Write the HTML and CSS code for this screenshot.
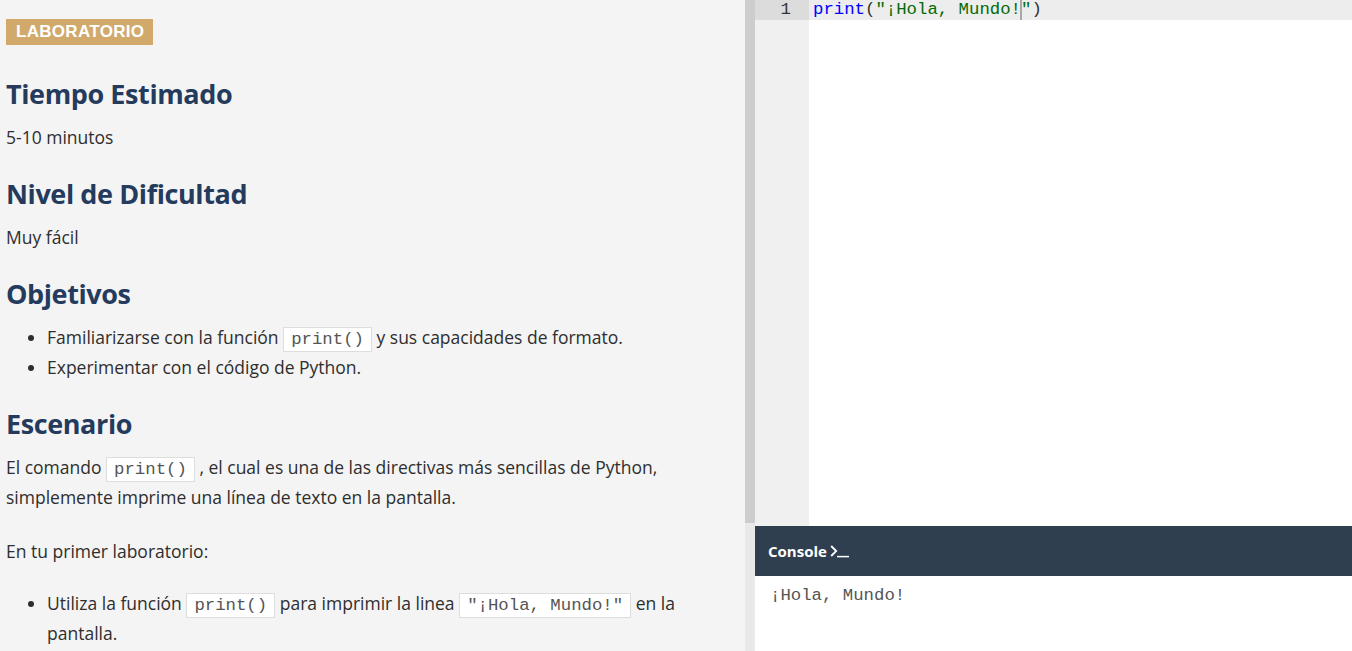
FILE: index.html
```html
<!DOCTYPE html>
<html lang="es">
<head>
<meta charset="utf-8">
<title>Laboratorio - ¡Hola, Mundo!</title>
<link rel="stylesheet" href="styles.css">
</head>
<body>
<div class="app">
  <main class="lesson">
    <div class="badge-row"><span class="badge">LABORATORIO</span></div>

    <h3 class="lesson-heading">Tiempo Estimado</h3>
    <p class="lesson-text">5-10 minutos</p>

    <h3 class="lesson-heading">Nivel de Dificultad</h3>
    <p class="lesson-text">Muy fácil</p>

    <h3 class="lesson-heading">Objetivos</h3>
    <ul class="lesson-list">
      <li>Familiarizarse con la función <code class="inline-code">print()</code> y sus capacidades de formato.</li>
      <li>Experimentar con el código de Python.</li>
    </ul>

    <h3 class="lesson-heading">Escenario</h3>
    <p class="lesson-text">El comando <code class="inline-code">print()</code> , el cual es una de las directivas más sencillas de Python, simplemente imprime una línea de texto en la pantalla.</p>

    <p class="lesson-text lesson-text-lead">En tu primer laboratorio:</p>
    <ul class="lesson-list">
      <li>Utiliza la función <code class="inline-code">print()</code> para imprimir la linea <code class="inline-code">"¡Hola, Mundo!"</code> en la pantalla.</li>
      <li>Una vez hecho esto, utiliza la función <code class="inline-code">print()</code> nuevamente, pero esta vez imprime tu nombre.</li>
    </ul>
  </main>

  <div class="scrollbar"><div class="scrollbar-thumb"></div></div>

  <section class="ide">
    <div class="editor">
      <div class="gutter">
        <div class="gutter-cell gutter-cell-active">1</div>
      </div>
      <div class="code">
        <div class="code-line code-line-active"><span class="tok-keyword">print</span><span class="tok-paren">(</span><span class="tok-string">"¡Hola, Mundo!</span><span class="cursor"></span><span class="tok-string">"</span><span class="tok-paren">)</span></div>
      </div>
    </div>
    <div class="console">
      <div class="console-header">
        <span class="console-title">Console</span>
        <svg class="console-icon" width="20" height="13" viewBox="0 0 20 13" aria-hidden="true">
          <polyline points="1.2,1 6.2,6 1.2,11" fill="none" stroke="#ffffff" stroke-width="1.8"/>
          <line x1="7" y1="11.6" x2="19" y2="11.6" stroke="#ffffff" stroke-width="1.5"/>
        </svg>
      </div>
      <div class="console-body">¡Hola, Mundo!</div>
    </div>
  </section>
</div>
</body>
</html>
```

FILE: styles.css
```css
html, body {
  margin: 0;
  padding: 0;
  height: 100%;
  overflow: hidden;
}

body {
  font-family: "Open Sans", "Noto Sans", sans-serif;
  background: #ffffff;
}

.app {
  display: flex;
  height: 651px;
  width: 1352px;
}

/* ---------- Lesson panel ---------- */
.lesson {
  width: 745px;
  flex: 0 0 745px;
  box-sizing: border-box;
  background: #f4f4f4;
  padding: 19px 24px 0 6px;
  overflow: hidden;
  color: #2e2e2e;
  font-size: 17.5px;
  line-height: 30px;
}

.badge-row {
  display: flex;
  margin-bottom: 31px;
}

.badge {
  display: inline-block;
  background: #d0a96b;
  color: #ffffff;
  font-family: "Liberation Sans", Arial, sans-serif;
  font-weight: bold;
  font-size: 17px;
  letter-spacing: 0.3px;
  line-height: 26px;
  height: 26px;
  padding: 0 9px 0 10px;
}

.lesson-heading {
  margin: 0 0 11px 0;
  padding-top: 1px;
  font-size: 27px;
  letter-spacing: -0.4px;
  line-height: 34px;
  font-weight: 700;
  color: #243b5e;
}

.lesson-text {
  margin: 0 0 24px 0;
}

.lesson-text-lead {
  margin-bottom: 22px;
}

.lesson-list {
  margin: 0 0 24px 0;
  padding-left: 41px;
}

.inline-code {
  font-family: "Liberation Mono", "Courier New", monospace;
  font-size: 17.33px;
  line-height: 1;
  color: #555555;
  background: #ffffff;
  border: 1px solid #dddddd;
  padding: 2px 7px;
}

/* ---------- Scrollbar ---------- */
.scrollbar {
  flex: 0 0 10px;
  width: 10px;
  background: #e9e9e9;
}

.scrollbar-thumb {
  height: 523px;
  background: #cdcdcd;
}

/* ---------- IDE ---------- */
.ide {
  flex: 1;
  display: flex;
  flex-direction: column;
  min-width: 0;
}

.editor {
  flex: 0 0 526px;
  display: flex;
  background: #ffffff;
  font-family: "Liberation Mono", "Courier New", monospace;
  font-size: 17.33px;
  line-height: 20px;
}

.gutter {
  flex: 0 0 54px;
  background: #f0f0f0;
  color: #333333;
}

.gutter-cell {
  height: 20px;
  text-align: right;
  padding-right: 18px;
}

.gutter-cell-active {
  background: #dcdcdc;
}

.code {
  flex: 1;
  min-width: 0;
}

.code-line {
  height: 20px;
  padding-left: 4px;
  white-space: pre;
  color: #000000;
}

.code-line-active {
  background: #ededed;
}

.tok-keyword {
  color: #0000ff;
}

.tok-paren {
  color: #333333;
}

.tok-string {
  color: #036a07;
}

.cursor {
  display: inline-block;
  width: 0;
  height: 20px;
  vertical-align: top;
  border-left: 2px solid #a8a8a8;
  margin-left: -1px;
  margin-right: -1px;
}

.console {
  flex: 1;
  display: flex;
  flex-direction: column;
}

.console-header {
  flex: 0 0 50px;
  display: flex;
  align-items: center;
  gap: 3px;
  padding-left: 13px;
  background: #2f3f4f;
  color: #ffffff;
}

.console-title {
  font-family: "Open Sans", sans-serif;
  font-weight: 700;
  font-size: 15px;
}

.console-icon {
  display: block;
  margin-top: 1px;
}

.console-body {
  flex: 1;
  background: #ffffff;
  padding: 10px 15px;
  font-family: "Liberation Mono", "Courier New", monospace;
  font-size: 17.33px;
  line-height: 20px;
  color: #555555;
}
```
